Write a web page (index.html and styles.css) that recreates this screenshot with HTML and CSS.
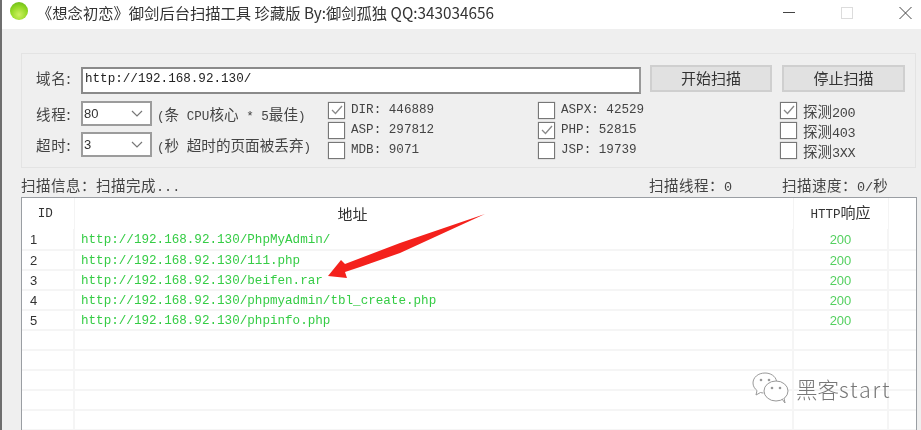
FILE: index.html
```html
<!DOCTYPE html>
<html lang="zh-CN">
<head>
<meta charset="utf-8">
<title>御剑后台扫描工具</title>
<link rel="stylesheet" href="styles.css">
</head>
<body>
<div class="window">
  <header class="titlebar">
    <span class="ball"></span>
    <span class="title">《想念初恋》御剑后台扫描工具 珍藏版 By:御剑孤独 QQ:343034656</span>
    <span class="winbtns">
      <svg width="12" height="12" viewBox="0 0 12 12"><path d="M0 5.500h12" stroke="#444" stroke-width="1"/></svg>
      <svg width="12" height="12" viewBox="0 0 12 12"><rect x=".5" y=".5" width="11" height="11" fill="none" stroke="#dcdcdc"/></svg>
      <svg width="13" height="12" viewBox="0 0 13 12"><path d="M.5 0l12 12M12.500 0l-12 12" stroke="#444" stroke-width="1" fill="none"/></svg>
    </span>
  </header>
  <main class="client">
    <section class="group">
      <div class="row-domain">
        <span class="label">域名:</span>
        <div class="input">http://192.168.92.130/</div>
        <div class="btn">开始扫描</div>
        <div class="btn btn-last">停止扫描</div>
      </div>
      <div class="row-options">
        <div class="params">
          <div class="param">
            <span class="label">线程:</span>
            <div class="select"><span>80</span><svg width="12" height="7" viewBox="0 0 12 7"><path d="M1 1l5 5 5-5" fill="none" stroke="#777" stroke-width="1.2"/></svg></div>
            <span class="hint"><i>(</i>条<i> CPU</i>核心<i> * 5</i>最佳<i>)</i></span>
          </div>
          <div class="param">
            <span class="label">超时:</span>
            <div class="select"><span>3</span><svg width="12" height="7" viewBox="0 0 12 7"><path d="M1 1l5 5 5-5" fill="none" stroke="#777" stroke-width="1.2"/></svg></div>
            <span class="hint"><i>(</i>秒<i> </i>超时的页面被丢弃<i>)</i></span>
          </div>
        </div>
        <div class="checks c1">
          <div class="check"><span class="box"><svg width="14" height="14" viewBox="0 0 14 14"><path d="M2 7l3.500 3.500L12 3" fill="none" stroke="#888" stroke-width="1.300"/></svg></span><span class="mono">DIR: 446889</span></div>
          <div class="check"><span class="box"></span><span class="mono">ASP: 297812</span></div>
          <div class="check"><span class="box"></span><span class="mono">MDB: 9071</span></div>
        </div>
        <div class="checks c2">
          <div class="check"><span class="box"></span><span class="mono">ASPX: 42529</span></div>
          <div class="check"><span class="box"><svg width="14" height="14" viewBox="0 0 14 14"><path d="M2 7l3.500 3.500L12 3" fill="none" stroke="#888" stroke-width="1.300"/></svg></span><span class="mono">PHP: 52815</span></div>
          <div class="check"><span class="box"></span><span class="mono">JSP: 19739</span></div>
        </div>
        <div class="checks">
          <div class="check"><span class="box"><svg width="14" height="14" viewBox="0 0 14 14"><path d="M2 7l3.500 3.500L12 3" fill="none" stroke="#888" stroke-width="1.300"/></svg></span><span class="probe">探测<i>200</i></span></div>
          <div class="check"><span class="box"></span><span class="probe">探测<i>403</i></span></div>
          <div class="check"><span class="box"></span><span class="probe">探测<i>3XX</i></span></div>
        </div>
      </div>
    </section>
    <div class="status">
      <span class="s-info">扫描信息：扫描完成<i>...</i></span>
      <span class="s-threads">扫描线程：<i>0</i></span>
      <span class="s-speed">扫描速度：<i>0/</i>秒</span>
    </div>
    <div class="list">
      <table>
        <colgroup><col class="col-id"><col class="col-url"><col class="col-code"><col></colgroup>
        <thead>
          <tr><th class="th-id">ID</th><th class="th-url">地址</th><th class="th-code"><i>HTTP</i>响应</th><th></th></tr>
        </thead>
        <tbody>
          <tr><td class="id">1</td><td class="url">http://192.168.92.130/PhpMyAdmin/</td><td class="code">200</td><td></td></tr>
          <tr><td class="id">2</td><td class="url">http://192.168.92.130/111.php</td><td class="code">200</td><td></td></tr>
          <tr><td class="id">3</td><td class="url">http://192.168.92.130/beifen.rar</td><td class="code">200</td><td></td></tr>
          <tr><td class="id">4</td><td class="url">http://192.168.92.130/phpmyadmin/tbl_create.php</td><td class="code">200</td><td></td></tr>
          <tr><td class="id">5</td><td class="url">http://192.168.92.130/phpinfo.php</td><td class="code">200</td><td></td></tr>
          <tr><td></td><td></td><td></td><td></td></tr>
          <tr><td></td><td></td><td></td><td></td></tr>
          <tr><td></td><td></td><td></td><td></td></tr>
          <tr><td></td><td></td><td></td><td></td></tr>
          <tr><td></td><td></td><td></td><td></td></tr>
          <tr><td></td><td></td><td></td><td></td></tr>
        </tbody>
      </table>
    </div>
  </main>
  <svg class="arrow" width="170" height="80" viewBox="0 0 170 80">
    <path d="M167 4 L82 33 L27 54 L23 50 L10 66 L29 68 L27 62 L42 57 L82 43 Z" fill="#f4211c"/>
  </svg>
  <div class="mark">
    <svg width="38" height="33" viewBox="0 0 38 33">
      <path d="M13 1C6 1 1 5.500 1 11c0 3 1.500 5.600 4 7.500L4 23l4.500-2.500c1 .3 2 .5 3 .5" fill="#fff" stroke="#999" stroke-width="1"/>
      <path d="M13 1c5.500 0 10.500 3 11.500 8" fill="none" stroke="#999" stroke-width="1"/>
      <ellipse cx="24" cy="19" rx="12" ry="10" fill="#fff" stroke="#999" stroke-width="1"/>
      <path d="M30 27l3 4-1-5" fill="#fff" stroke="#999" stroke-width="1"/>
      <circle cx="9" cy="8" r="1.300" fill="#999"/><circle cx="17" cy="8" r="1.300" fill="#999"/>
      <circle cx="20" cy="16" r="1.300" fill="#999"/><circle cx="28" cy="16" r="1.300" fill="#999"/>
    </svg>
    <span class="mark-text">黑客<b>start</b></span>
  </div>
</div>
</body>
</html>
```
FILE: styles.css
```css
* { box-sizing: border-box; }
html, body { margin: 0; padding: 0; height: 100%; overflow: hidden; background: #fff; }
body { font-family: "Noto Sans CJK SC", "Liberation Sans", sans-serif; color: #333; }
i { font-style: normal; font-family: "Liberation Mono", monospace; font-size: 12.600px; letter-spacing: 0; white-space: pre; }

.window { position: relative; width: 921px; height: 430px; border-left: 2px solid #6e6e6e; overflow: hidden; filter: blur(.35px); }

.titlebar { height: 29px; background: #fff; display: flex; align-items: flex-start; padding-left: 8px; }
.ball { width: 18px; height: 18px; margin-top: 2px; border-radius: 50%; background: radial-gradient(circle at 50% 70%, #cdf060 0%, #96da26 50%, #5cb012 100%); flex: none; }
.title { margin-left: 9px; font-size: 15.300px; line-height: 24px; white-space: nowrap; color: #333; }
.winbtns { margin-left: auto; margin-right: 9px; padding-top: 7px; display: flex; align-items: flex-start; gap: 46px; }

.client { height: 401px; background: #efefef; padding: 24px 0 0 19px; }

.group { width: 895px; height: 115px; border: 1px solid #e3e3e3; padding: 11px 0 0 14px; }
.row-domain { display: flex; align-items: flex-start; }
.label { width: 45px; flex: none; font-size: 14.500px; line-height: 26px; letter-spacing: .8px; color: #444; white-space: nowrap; }
.input { width: 560px; height: 27px; margin-top: 2px; border: 2px solid #8a8a8a; border-right-color: #999; background: #fff; font: 12.600px/21px "Liberation Mono", monospace; padding-left: 2px; color: #222; }
.btn { width: 122px; height: 27px; margin-left: 9px; background: #e1e1e1; border: 2px solid #cfcfcf; text-align: center; font-size: 15px; line-height: 22px; color: #333; }
.btn-last { width: 123px; margin-left: 10px; }

.row-options { display: flex; margin-top: 7px; }
.params { width: 292px; flex: none; }
.param { display: flex; align-items: center; height: 25px; margin-bottom: 6px; }
.select { width: 71px; height: 25px; flex: none; background: #fff; border: 2px solid #9c9c9c; display: flex; align-items: center; justify-content: space-between; padding: 0 7px 0 1px; font: 13px "Liberation Sans", sans-serif; color: #333; }
.hint { margin-left: 5px; font-size: 14.600px; white-space: nowrap; color: #444; }

.checks { width: 210px; flex: none; margin-top: -1px; }
.checks.c2 { width: 242px; }
.check { display: flex; align-items: center; height: 20px; }
.box { width: 17px; height: 17px; flex: none; background: #fff; border: 1px solid #777; box-shadow: 0 0 1px #999; display: flex; align-items: center; justify-content: center; }
.mono { margin-left: 6px; font: 12.600px "Liberation Mono", monospace; color: #444; white-space: nowrap; }
.probe { margin-left: 6px; font-size: 14.500px; color: #444; white-space: nowrap; }
.probe i { font-size: 13.500px; letter-spacing: -.4px; }

.status { position: relative; height: 29px; font-size: 14.500px; letter-spacing: .5px; line-height: 34px; color: #444; white-space: nowrap; }
.status span { position: absolute; top: 0; }
.status i { font-size: 13.500px; }
.s-info { left: 0; }
.s-threads { left: 628px; }
.s-speed { left: 761px; }

.list { width: 896px; height: 240px; background: #fff; border: 1px solid #9a9ea3; border-bottom: 0; overflow: hidden; }
table { border-collapse: collapse; table-layout: fixed; width: 894px; }
.col-id { width: 52px; }
.col-url { width: 719px; }
.col-code { width: 95px; }
th { height: 31px; padding: 0; font-weight: normal; font-size: 15px; color: #333; border-right: 1px solid #f4f4f4; }
th:last-child { border-right: 0; }
.th-url { padding-right: 162px; }
.th-id { font: 12.600px "Liberation Mono", monospace; padding-right: 5px; }
.th-code, td { line-height: 16px; }
td { height: 20px; padding: 2px 0 0; border-bottom: 2px solid #f5f5f5; border-right: 2px solid #f5f5f5; font-size: 12.600px; }
td:last-child { border-right: 0; }
tbody tr:first-child td { height: 21px; }
.id { padding-left: 8px; color: #333; font-family: "Liberation Sans", sans-serif; font-size: 13px; }
.url { padding-left: 6px; color: #35cc45; font-family: "Liberation Mono", monospace; white-space: nowrap; }
.code { text-align: center; color: #55d060; font-family: "Liberation Sans", sans-serif; font-size: 13px; }

.arrow { position: absolute; left: 316px; top: 210px; }
.mark { position: absolute; left: 750px; top: 371px; display: flex; align-items: center; gap: 6px; }
.mark-text { font-size: 21.500px; font-weight: 300; color: #777; line-height: 35px; white-space: nowrap; text-shadow: 0 0 1px #fff; }
.mark-text b { font-weight: 300; letter-spacing: 1.800px; }
```
